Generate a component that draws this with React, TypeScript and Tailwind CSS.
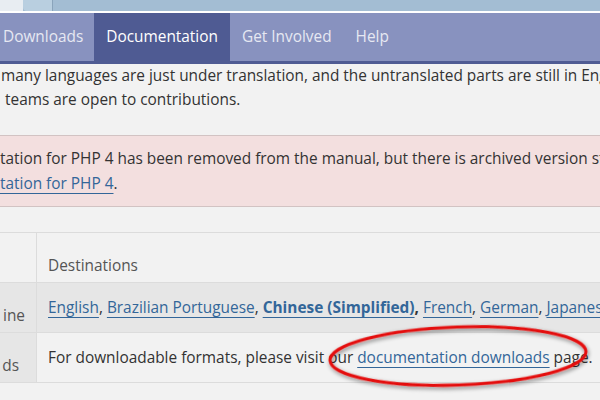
import React from "react";

const link = "text-[#336699] underline decoration-[#336699] underline-offset-[4px] decoration-1";

export default function App() {
  return (
    <div className="relative w-[600px] h-[400px] overflow-hidden bg-[#f2f2f2] text-[#333] text-[15.4px]" style={{ fontFamily: '"Open Sans", sans-serif' }}>
      {/* browser strip */}
      <div className="h-[11px] bg-[#a3bdd3] flex">
        <div className="w-[23px] bg-[#e8edf2]" />
        <div className="w-[30px] bg-[#b9cfe0] border-r border-[#8aa4bb] rounded-bl-[4px]" />
      </div>
      <div className="h-[2px] bg-white" />
      {/* nav */}
      <div className="h-[51px] bg-[#8892bf] border-b-[3px] border-[#4f5b93] flex items-stretch text-[#e6e8f2] whitespace-nowrap">
        <div className="flex items-center pl-[3px] pr-[11px]">Downloads</div>
        <div className="flex items-center px-[12px] bg-[#4f5b93] text-white">Documentation</div>
        <div className="flex items-center px-[12px]">Get Involved</div>
        <div className="flex items-center px-[12px]">Help</div>
      </div>
      {/* intro text */}
      <div className="leading-[24px] whitespace-nowrap overflow-hidden">
        <div className="pl-[1px]">many languages are just under translation, and the untranslated parts are still in English.</div>
        <div className="pl-[5px]">teams are open to contributions.</div>
      </div>
      {/* warning */}
      <div className="mt-[23px] h-[72px] bg-[#f3dfdf] border-y border-[#d2c3c3] whitespace-nowrap overflow-hidden leading-[25px] pt-[10px]">
        <div>tation for PHP 4 has been removed from the manual, but there is archived version still available.</div>
        <div><span className={link}>tation for PHP 4</span>.</div>
      </div>
      {/* table */}
      <div className="mt-[25px] border-t border-[#dcdcdc] whitespace-nowrap overflow-hidden">
        <div className="flex h-[50px] border-b border-[#dcdcdc]">
          <div className="w-[37px] shrink-0 border-r border-[#dcdcdc]" />
          <div className="flex-1 flex items-end pb-[5px] pl-[11px] text-[#555]">Destinations</div>
        </div>
        <div className="flex h-[50px] border-b border-[#dcdcdc] bg-[#e6e6e6]">
          <div className="w-[37px] shrink-0 border-r border-[#dcdcdc] flex items-end pb-[5px] justify-end pr-[11px] text-[#555]">ine</div>
          <div className="flex-1 flex items-center pl-[11px]">
            <span className={link}>English</span>,&nbsp;
            <span className={link}>Brazilian Portuguese</span>,&nbsp;
            <span className={link + " font-bold"}>Chinese (Simplified)</span><b>,</b>&nbsp;
            <span className={link}>French</span>,&nbsp;
            <span className={link}>German</span>,&nbsp;
            <span className={link}>Japanese</span>
          </div>
        </div>
        <div className="flex h-[50px] border-b border-[#dcdcdc]">
          <div className="w-[37px] shrink-0 border-r border-[#dcdcdc] bg-[#e6e6e6] flex items-end pb-[5px] justify-end pr-[17px] text-[#555]">ds</div>
          <div className="flex-1 flex items-center pl-[11px]">
            For downloadable formats, please visit our&nbsp;<span className={link}>documentation downloads</span>&nbsp;page.
          </div>
        </div>
      </div>
      {/* red ellipse */}
      <svg className="absolute left-0 top-0 pointer-events-none" width="600" height="400">
        <defs>
          <filter id="sh" x="-20%" y="-50%" width="140%" height="200%">
            <feGaussianBlur in="SourceAlpha" stdDeviation="2" />
            <feOffset dx="1" dy="2" result="b" />
            <feComponentTransfer><feFuncA type="linear" slope="0.5" /></feComponentTransfer>
            <feMerge><feMergeNode /><feMergeNode in="SourceGraphic" /></feMerge>
          </filter>
        </defs>
        <ellipse cx="458" cy="356" rx="128" ry="29" fill="none" stroke="#e4100f" strokeWidth="3" transform="rotate(-2 458 356)" filter="url(#sh)" />
      </svg>
    </div>
  );
}
